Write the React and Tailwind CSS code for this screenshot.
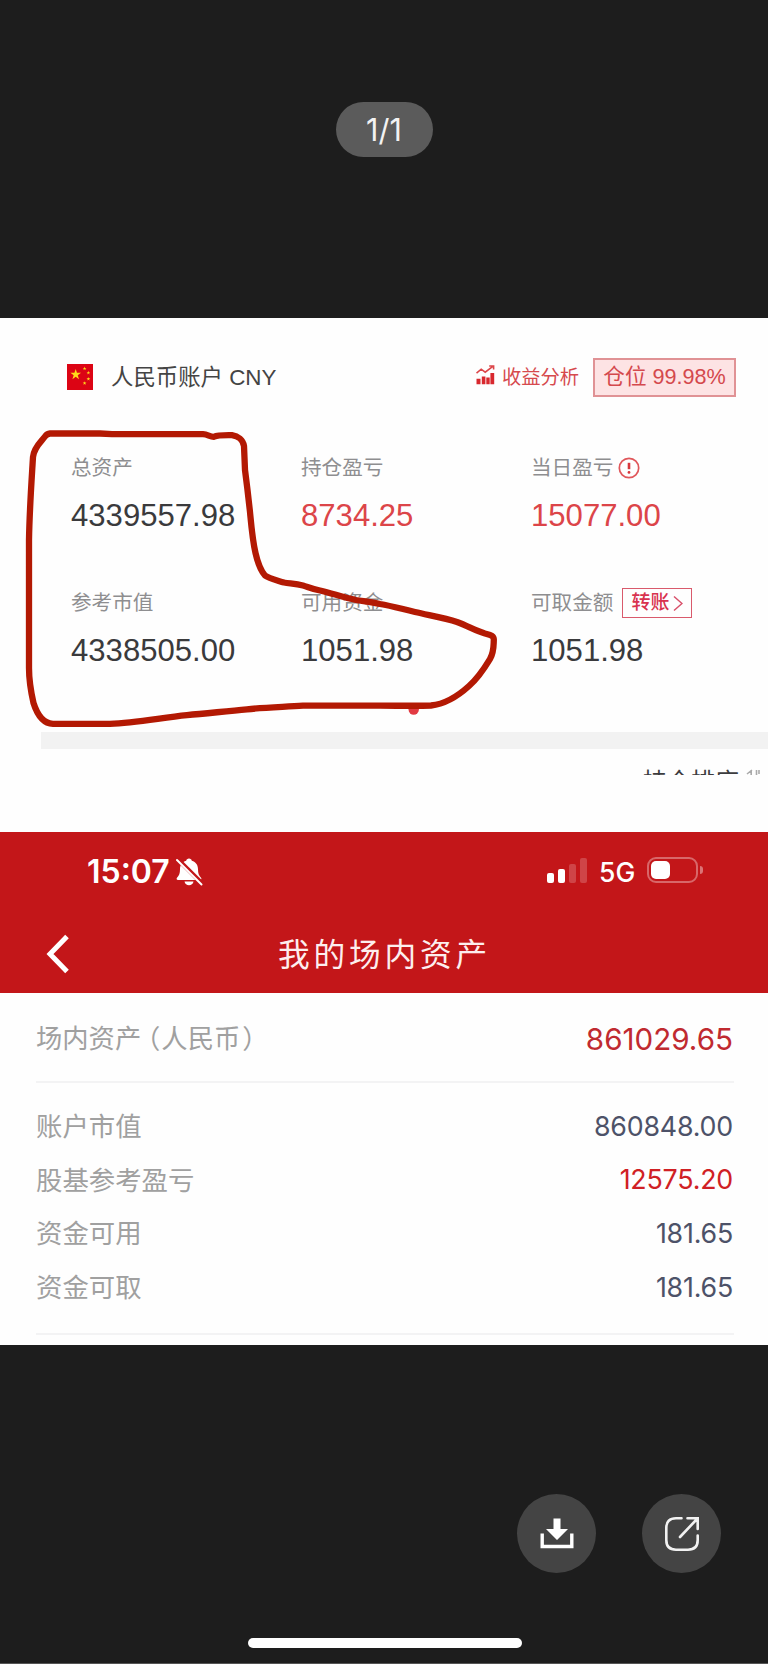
import React from 'react'

const CJK = "font-['Liberation_Sans','Noto_Sans_CJK_SC',sans-serif]"
const INTER = "font-['Inter','Noto_Sans_CJK_SC',sans-serif]"

const HOLDINGS = [
  { label: '总资产', value: '4339557.98', color: 'text-[#3a3a3c]' },
  { label: '持仓盈亏', value: '8734.25', color: 'text-[#dc4549]' },
  { label: '当日盈亏', value: '15077.00', color: 'text-[#dc4549]', extra: 'alert' },
  { label: '参考市值', value: '4338505.00', color: 'text-[#3a3a3c]' },
  { label: '可用资金', value: '1051.98', color: 'text-[#3a3a3c]' },
  { label: '可取金额', value: '1051.98', color: 'text-[#3a3a3c]', extra: 'transfer' },
]

const DETAILS = [
  { label: '账户市值', value: '860848.00', color: 'text-[#4d5268]' },
  { label: '股基参考盈亏', value: '12575.20', color: 'text-[#d02024]' },
  { label: '资金可用', value: '181.65', color: 'text-[#4d5268]' },
  { label: '资金可取', value: '181.65', color: 'text-[#4d5268]' },
]

const STAR = '0,-1 .225,-.309 .951,-.309 .363,.118 .588,.809 0,.382 -.588,.809 -.363,.118 -.951,-.309 -.225,-.309'

const Flag = () => (
  <svg className="w-[26px] h-[26px] shrink-0" viewBox="0 0 26 26">
    <rect width="26" height="26" fill="#dc0414" />
    <g fill="#ffd91a">
      <polygon points={STAR} transform="translate(8.7 10.6) scale(5.6)" />
      <polygon points={STAR} transform="translate(17.6 4.6) scale(2)" />
      <polygon points={STAR} transform="translate(21.4 8.8) scale(2)" />
      <polygon points={STAR} transform="translate(21.4 14.9) scale(2)" />
      <polygon points={STAR} transform="translate(17.6 19.2) scale(2)" />
    </g>
  </svg>
)

const ChartIcon = () => (
  <svg className="w-[19px] h-[20px] shrink-0 -mt-[4px]" viewBox="0 0 19 20" fill="none">
    <path d="M0.5 8.2 L5.2 4.2 L9.2 7.2 L16.5 1.6 M13.2 1 H17.6 V4.6" stroke="#dc4549" strokeWidth="1.6" />
    <path d="M0.5 13.8h4v5.4h-4z M5.8 11.5h3.6v7.7H5.8z M10.3 12.5h3.4v6.7h-3.4z M14.4 8h3.8v11.2h-3.8z" fill="#d8282e" />
  </svg>
)

const AlertIcon = () => (
  <svg className="w-[22px] h-[22px] ml-[5px]" viewBox="0 0 22 22" fill="none">
    <circle cx="11" cy="11" r="9.7" stroke="#e0575b" strokeWidth="1.7" />
    <path d="M11 5.8v6.4" stroke="#d8363b" strokeWidth="2.6" />
    <circle cx="11" cy="15.4" r="1.4" fill="#d8363b" />
  </svg>
)

const Transfer = () => (
  <span className="flex items-center ml-[9px] w-[70px] h-[30px] pl-[8px] border-[1.5px] border-[#d95a6c] text-[#d8324e] text-[19px] font-medium">
    转账
    <svg className="w-[10px] h-[17px] ml-[4px]" viewBox="0 0 10 17" fill="none">
      <path d="M1 1.5 L9 8.5 L1 15.5" stroke="#d8506a" strokeWidth="1.5" />
    </svg>
  </span>
)

/** Hand-drawn loop over the holdings figures */
const Marker = () => (
  <svg className="absolute left-0 top-0 w-[768px] h-[514px]" viewBox="0 318 768 514" fill="none">
    <circle cx="413.7" cy="709.5" r="5.2" fill="#e23a42" />
    <path
      d="M50 433.5 L100 433.5 L112 434.2 L203 434.2 C208 434.5 210 437 214 436.8 C217 435.3 221 435 232 435.2 C238 436 243 440 244 446 L245 470 C247 485 248.5 498 250 512 C251.5 528 252.5 540 255.5 553 C258 564 260 570 265 575.5 C269 578.5 276 580 284 582.5 C290 583.5 296 583.8 303 585.5 C308 587 312 589 320 590.5 C333 593.5 343 597.5 356 600 C364 601.3 372 602 380 604 C392 606 400 608.5 415 612 C430 615.5 445 618 457 622 C468 626 476 631 485 633.5 C491 635 494 635.5 493.8 640 C493.5 647 494 652 490 659 C484 669 477 679 469 686 C458 696 446 704 431 705.5 C420 706 400 705.7 380 705.7 L303 705.7 C283 707 263 707.5 247 709.3 C227 711.5 207 713 187 715.2 C160 718 135 723 110 723.8 L53 723.8 C43 723.5 37 714 33.5 703 C31 692 29 681 29 668 L29 540 C29.5 510 31.5 482 33 457 C34 447 41 442 45 436.5 C46.5 434.5 48 433.7 50 433.5 Z"
      stroke="#b31903"
      strokeWidth="6.3"
      strokeLinejoin="round"
    />
  </svg>
)

const HoldingsCard = () => (
  <section className={`relative h-[514px] bg-[#fefefe] overflow-hidden ${CJK}`}>
    <div className="flex items-center h-[40px] mt-[39px] pl-[67px]">
      <Flag />
      <span className="ml-[18px] mt-[2px] w-[365px] text-[22.4px] text-[#444]">人民币账户 CNY</span>
      <ChartIcon />
      <span className="ml-[7px] mt-[2px] w-[91px] text-[19.3px] text-[#d64a4e] whitespace-nowrap">收益分析</span>
      <span className="flex items-center justify-center w-[143px] h-[39px] pt-px border-2 border-[#e09295] bg-[#fde3e4] text-[21.6px] text-[#d4494d] whitespace-nowrap">
        仓位 99.98%
      </span>
    </div>
    <div className="grid grid-cols-[230px_230px_1fr] auto-rows-[135px] mt-[55px] pl-[71px]">
      {HOLDINGS.map((h) => (
        <div key={h.label}>
          <div className="flex items-center h-[32px] text-[20.6px] text-[#8e8e90]">
            {h.label}
            {h.extra === 'alert' && <AlertIcon />}
            {h.extra === 'transfer' && <Transfer />}
          </div>
          <div className={`mt-[14px] h-[36px] leading-[36px] text-[31.1px] ${h.color}`}>{h.value}</div>
        </div>
      ))}
    </div>
    <div className="ml-[41px] mt-[10px] h-[17px] bg-[#f2f2f2]" />
    <div className="flex mt-[17px] ml-[643px] h-[9px] overflow-hidden text-[24px] leading-[32px] text-[#3c3c3e]">
      持仓排序
      <svg className="w-[14px] h-[9px] ml-[7px]" viewBox="0 0 14 9" fill="none" stroke="#aaa" strokeWidth="1.6">
        <path d="M6 4 L1 8 M5.2 4 V9 M10.5 4 V9 M13 4 V8" />
      </svg>
    </div>
    <Marker />
  </section>
)

const BellOff = () => (
  <svg className="w-[28px] h-[30px] ml-[5px]" viewBox="0 0 28 30">
    <path d="M14 1.5c1.5 0 2.6 1 2.8 2.2 4.2 1.2 6.2 4.5 6.2 8.5 0 4.2.8 6.3 3 8.500.8.900.4 2.3-1 2.3H3c-1.400 0-1.800-1.400-1-2.3 2.2-2.2 3-4.3 3-8.500 0-4 2-7.3 6.2-8.500C11.4 2.5 12.5 1.5 14 1.5z" fill="#fff" />
    <path d="M9.5 24.5h9c-.5 2.5-2.3 3.8-4.5 3.8s-4-1.300-4.500-3.800z" fill="#fff" />
    <path d="M3 2.5 L28 27.5" stroke="#c31619" strokeWidth="4.5" />
    <path d="M2 3 L26.5 27.5" stroke="#fff" strokeWidth="2" strokeLinecap="round" />
  </svg>
)

const AssetsHeader = () => (
  <header className={`h-[161px] bg-[#c31619] text-white overflow-hidden ${INTER}`}>
    <div className="flex items-center h-[40px] mt-[20px] pl-[87px]">
      <span className="text-[32px] leading-[40px] font-semibold">15:07</span>
      <BellOff />
      <div className="flex items-end gap-[4px] h-[25px] -mt-[3px] ml-auto">
        <i className="w-[7px] h-[10px] rounded-[2px] bg-white" />
        <i className="w-[7px] h-[14px] rounded-[2px] bg-white" />
        <i className="w-[7px] h-[19px] rounded-[2px] bg-white/20" />
        <i className="w-[7px] h-[25px] rounded-[2px] bg-white/20" />
      </div>
      <span className="ml-[12px] w-[48px] text-[26.5px] leading-[40px] font-medium">5G</span>
      <div className="flex items-center w-[51px] h-[26px] -mt-[4px] border-2 border-white/35 rounded-[9px] pl-[2px]">
        <div className="w-[19px] h-[18px] rounded-[5px] bg-white" />
      </div>
      <i className="w-[3px] h-[8px] -mt-[4px] ml-[2px] mr-[65px] rounded-r-full bg-white/40" />
    </div>
    <div className="flex items-center h-[44px] mt-[40px]">
      <svg className="w-[24px] h-[40px] ml-[46px]" viewBox="0 0 24 40" fill="none">
        <path d="M21 2.5 L4 20 L21 37.5" stroke="#fff" strokeWidth="5" />
      </svg>
      <h1 className="ml-[208px] pt-[2px] text-[31.7px] leading-[44px] tracking-[3.8px] text-[#fdeeee]">我的场内资产</h1>
    </div>
  </header>
)

const AssetsList = () => (
  <section className={`h-[352px] bg-[#fefefe] overflow-hidden px-[36px] ${INTER}`}>
    <div className="flex items-center justify-between h-[90px] pt-[4px] border-b-2 border-[#f3f3f4] -mr-[2px] pr-px">
      <div className="flex text-[26.3px] text-[#a0a0a0]">
        <span>场内资产</span>
        <span className="ml-[6px] [font-feature-settings:'halt']">（</span>
        <span className="ml-px">人民币</span>
        <span className="ml-[2px] [font-feature-settings:'halt']">）</span>
      </div>
      <span className="text-[29.6px] text-[#c02a30]">861029.65</span>
    </div>
    <div className="mt-[17px] h-[235px] border-b-2 border-[#f3f3f4] -mr-[2px]">
      {DETAILS.map((d) => (
        <div key={d.label} className="flex items-center justify-between h-[53.7px] pr-px">
          <span className="text-[26.4px] text-[#a0a0a0]">{d.label}</span>
          <span className={`mb-[2px] text-[26.8px] tracking-[-0.2px] ${d.color}`}>{d.value}</span>
        </div>
      ))}
    </div>
  </section>
)

export default function App() {
  return (
    <div className="flex flex-col w-[768px] h-[1664px] bg-[#1d1d1d] overflow-hidden">
      <div className="h-[318px] shrink-0 pt-[102px]">
        <div className={`mx-auto w-[97px] h-[55px] rounded-full bg-[#5b5b5b] text-[#f2f2f2] text-[30.5px] leading-[56px] text-center ${INTER}`}>
          1/1
        </div>
      </div>
      <HoldingsCard />
      <AssetsHeader />
      <AssetsList />
      <div className="flex gap-[46px] mt-[149px] pl-[517px]">
        <button className="flex items-center justify-center w-[79px] h-[79px] rounded-full bg-[#444]">
          <svg className="w-[34px] h-[31px]" viewBox="0 0 34 31">
            <path d="M13.5 0.5h7v10.5h7.5L17 22 6 11h7.5z" fill="#fff" />
            <path d="M2.2 15.5 V28.5 H31.8 V15.5" fill="none" stroke="#fff" strokeWidth="3.4" />
          </svg>
        </button>
        <button className="flex items-center justify-center w-[79px] h-[79px] rounded-full bg-[#444]">
          <svg className="w-[36px] h-[36px]" viewBox="0 0 36 36" fill="none" stroke="#f2f2f2" strokeWidth="2.6">
            <path d="M17.5 2.3 H12 Q2.3 2.3 2.3 12 V24 Q2.3 33.7 12 33.7 H24 Q33.7 33.7 33.7 24 V19.5" strokeLinecap="round" />
            <path d="M23.5 2.3 H33.7 V13 M33 3 L16 21" strokeLinecap="round" />
          </svg>
        </button>
      </div>
      <div className="mt-[65px] ml-[248px] w-[274px] h-[10px] rounded-full bg-white" />
      <div className="mt-auto h-px bg-[#555]" />
    </div>
  )
}
